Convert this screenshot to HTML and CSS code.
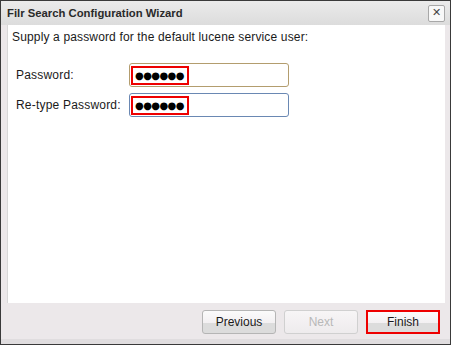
FILE: index.html
```html
<!DOCTYPE html>
<html lang="en">
<head>
    <meta charset="UTF-8">
    <title>Filr Search Configuration Wizard</title>
    <link rel="stylesheet" href="styles.css">
</head>
<body>
    <div class="dialog">
        <div class="titlebar">
            <span class="title">Filr Search Configuration Wizard</span>
            <button class="close" type="button">&#x2715;</button>
        </div>
        <div class="content">
            <p class="intro">Supply a password for the default lucene service user:</p>
            <div class="form">
                <label class="label" for="pw1">Password:</label>
                <div class="field field-focus">
                    <span class="mark">&#9679;&#9679;&#9679;&#9679;&#9679;&#9679;</span>
                </div>
                <label class="label" for="pw2">Re-type Password:</label>
                <div class="field field-blue">
                    <span class="mark">&#9679;&#9679;&#9679;&#9679;&#9679;&#9679;</span>
                </div>
            </div>
        </div>
        <div class="footer">
            <button class="btn" type="button">Previous</button>
            <button class="btn" type="button" disabled>Next</button>
            <button class="btn btn-mark" type="button">Finish</button>
        </div>
    </div>
</body>
</html>
```

FILE: styles.css
```css
html, body {
    margin: 0;
    padding: 0;
    background: #ffffff;
}
.dialog {
    width: 451px;
    height: 345px;
    box-sizing: border-box;
    border: 1px solid #3a3a3a;
    background: #ece8ea;
    display: flex;
    flex-direction: column;
    font-family: "Liberation Sans", Arial, sans-serif;
    color: #1a1a1a;
}
.titlebar {
    height: 24px;
    display: flex;
    align-items: center;
    justify-content: space-between;
    padding: 0 5px 0 6px;
    background: linear-gradient(#ebebeb, #dcdcdc);
}
.title {
    font-size: 11.3px;
    font-weight: bold;
    color: #2a2a2a;
}
.close {
    width: 17px;
    height: 17px;
    padding: 0;
    margin: 0;
    border: 1px solid #a8a8a8;
    border-radius: 2px;
    background: #f8f8f8;
    color: #444;
    font-size: 11px;
    line-height: 14px;
    font-family: "DejaVu Sans", sans-serif;
}
.content {
    flex: 1;
    margin: 0 5px 0 6px;
    background: #ffffff;
    border-left: 1px solid #d8d8d8;
}
.intro {
    margin: 4px 0 0 4px;
    font-size: 12px;
    letter-spacing: 0.15px;
    line-height: 16px;
}
.form {
    display: grid;
    grid-template-columns: 113px 160px;
    row-gap: 6px;
    align-items: center;
    margin: 18px 0 0 8px;
}
.label {
    font-size: 12px;
    letter-spacing: 0.2px;
}
.field {
    height: 24px;
    box-sizing: border-box;
    border: 1px solid #b39d6e;
    border-radius: 3px;
    background: #ffffff;
    padding: 2px 0 0 1px;
}
.field-blue {
    border-color: #6a88b3;
}
.mark {
    display: block;
    width: 58px;
    height: 19px;
    box-sizing: border-box;
    border: 2px solid #ee0000;
    font-family: "DejaVu Sans", sans-serif;
    font-size: 10px;
    line-height: 15px;
    letter-spacing: -0.6px;
    padding-left: 2px;
    color: #000;
}
.footer {
    height: 35px;
    display: flex;
    align-items: center;
    justify-content: flex-end;
    gap: 8px;
    padding: 1px 10px 0 0;
    border-bottom: 5px solid #e0dddf;
}
.btn {
    width: 74px;
    height: 24px;
    border: 1px solid #b5b5b5;
    border-radius: 3px;
    background: linear-gradient(#fbfbfb 0%, #f3f0f2 55%, #dcdcdc 56%, #dcdcdc 100%);
    font-family: "Liberation Sans", Arial, sans-serif;
    font-size: 12px;
    color: #1a1a1a;
    padding: 0;
}
.btn:disabled {
    color: #b8b8b8;
    border-color: #d0d0d0;
    background: linear-gradient(#f7f5f6, #eeebed);
}
.btn-mark {
    border: 2px solid #ee0000;
    border-radius: 0;
}
```
